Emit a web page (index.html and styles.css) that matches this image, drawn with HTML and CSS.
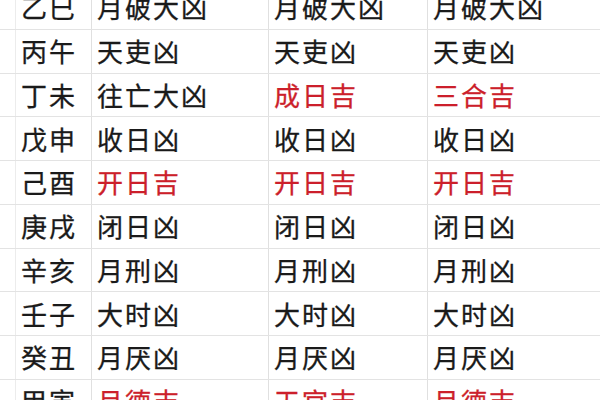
FILE: index.html
```html
<!DOCTYPE html>
<html lang="zh-CN">
<head>
<meta charset="utf-8">
<link rel="stylesheet" href="styles.css">
</head>
<body>
<div class="sheet">
  <div class="row"><div class="c0"></div><div class="cell">乙巳</div><div class="cell">月破大凶</div><div class="cell">月破大凶</div><div class="cell">月破大凶</div></div>
  <div class="row"><div class="c0"></div><div class="cell">丙午</div><div class="cell">天吏凶</div><div class="cell">天吏凶</div><div class="cell">天吏凶</div></div>
  <div class="row"><div class="c0"></div><div class="cell">丁未</div><div class="cell">往亡大凶</div><div class="cell red">成日吉</div><div class="cell red">三合吉</div></div>
  <div class="row"><div class="c0"></div><div class="cell">戊申</div><div class="cell">收日凶</div><div class="cell">收日凶</div><div class="cell">收日凶</div></div>
  <div class="row"><div class="c0"></div><div class="cell">己酉</div><div class="cell red">开日吉</div><div class="cell red">开日吉</div><div class="cell red">开日吉</div></div>
  <div class="row"><div class="c0"></div><div class="cell">庚戌</div><div class="cell">闭日凶</div><div class="cell">闭日凶</div><div class="cell">闭日凶</div></div>
  <div class="row"><div class="c0"></div><div class="cell">辛亥</div><div class="cell">月刑凶</div><div class="cell">月刑凶</div><div class="cell">月刑凶</div></div>
  <div class="row"><div class="c0"></div><div class="cell">壬子</div><div class="cell">大时凶</div><div class="cell">大时凶</div><div class="cell">大时凶</div></div>
  <div class="row"><div class="c0"></div><div class="cell">癸丑</div><div class="cell">月厌凶</div><div class="cell">月厌凶</div><div class="cell">月厌凶</div></div>
  <div class="row"><div class="c0"></div><div class="cell">甲寅</div><div class="cell red">月德吉</div><div class="cell red">天官吉</div><div class="cell red">月德吉</div></div>
</div>
</body>
</html>
```
FILE: styles.css
```css
html, body {
  margin: 0;
  padding: 0;
  background: #ffffff;
  overflow: hidden;
}
body {
  width: 600px;
  height: 400px;
  font-family: "Noto Sans CJK SC", "Noto Sans", sans-serif;
  color: #1a1a1a;
}
.sheet {
  margin-top: -14px;
}
.row {
  display: grid;
  grid-template-columns: 16px 76px 177px 159px 1fr;
  height: 43.75px;
  box-sizing: border-box;
  border-bottom: 1px solid #e3e3e3;
}
.c0 {
  border-right: 1px solid #ececec;
}
.cell {
  display: flex;
  align-items: center;
  padding-left: 5px;
  font-size: 26px;
  letter-spacing: 2px;
  line-height: 1;
  -webkit-text-stroke: 0.3px currentColor;
  border-right: 1px solid #e0e0e0;
  white-space: nowrap;
}
.cell:last-child {
  border-right: none;
}
.red {
  color: #cc1f2b;
}
```
